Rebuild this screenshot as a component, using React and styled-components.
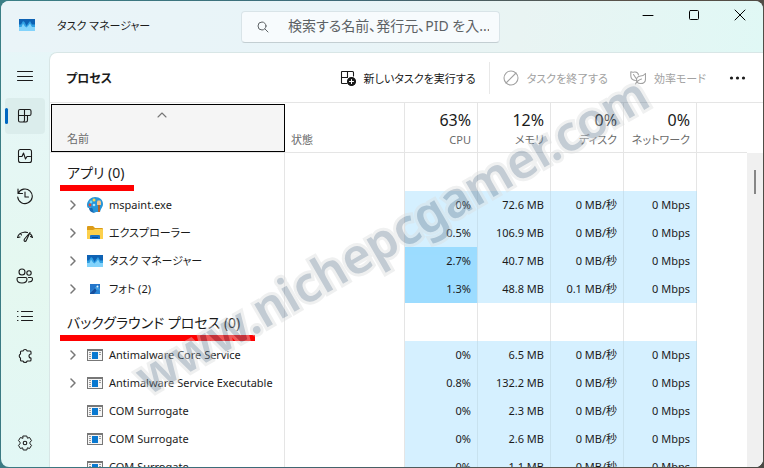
import React, { useState } from "react";
import styled, { createGlobalStyle } from "styled-components";

const GlobalStyle = createGlobalStyle`
  * {
    box-sizing: border-box;
  }
  body {
    margin: 0;
    font-family: "Noto Sans", "Noto Sans CJK JP", sans-serif;
    font-feature-settings: "palt";
    font-size: 11px;
    color: #1b1b1b;
  }
  button,
  input {
    font: inherit;
    font-feature-settings: inherit;
    color: inherit;
    border: none;
    background: none;
    padding: 0;
  }
`;

const Desktop = styled.div`
  height: 100vh;
  padding: 1px;
  overflow: hidden;
  background: linear-gradient(100deg, #3b7f86, #3d6a78 40%, #5a5148 75%, #4b4a45);
`;

const Window = styled.div`
  position: relative;
  height: 100%;
  display: flex;
  flex-direction: column;
  overflow: hidden;
  border-radius: 8px;
  background: linear-gradient(180deg, #eaf4f8 0, #e6f6f8 60px, #e5f8f0 280px, #e2f7f5);
`;

const TitleBar = styled.header`
  display: flex;
  align-items: center;
  height: 51px;
  flex: none;
  background: linear-gradient(100deg, #eaf4f8, #e8f4f8 45%, #e9f4f3 68%, #e0f8f5);
`;

const Title = styled.div`
  display: flex;
  align-items: center;
  gap: 22px;
  width: 240px;
  padding-left: 18px;
  padding-bottom: 3px;
`;

const SearchBox = styled.label`
  display: flex;
  align-items: center;
  gap: 18px;
  flex: 0 1 259px;
  height: 32px;
  padding: 0 10px 0 14px;
  border: 1px solid #d9e4e8;
  border-bottom-color: #c3ced2;
  border-radius: 4px;
  background: #f7fbfd;
  color: #5d6265;
  input {
    flex: 1;
    min-width: 0;
    padding-bottom: 2px;
    font-size: 14px;
    outline: none;
  }
  input::placeholder {
    color: #5d6265;
    opacity: 1;
  }
`;

const WindowButtons = styled.div`
  display: flex;
  align-self: flex-start;
  margin-left: auto;
  button {
    width: 46px;
    height: 28px;
    display: grid;
    place-items: center;
    color: #000;
  }
`;

const Body = styled.div`
  flex: 1;
  min-height: 0;
  display: flex;
`;

const SideBar = styled.nav`
  width: 48px;
  flex: none;
  display: flex;
  flex-direction: column;
  gap: 4px;
  padding: 6px 4px;
`;

const SideButton = styled.button`
  position: relative;
  height: 36px;
  display: grid;
  place-items: center;
  border-radius: 4px;
  margin-top: ${({ $last }) => ($last ? "auto" : "0")};
  background: ${({ $active }) => ($active ? "#dbedec" : "none")};
  &::before {
    content: "";
    display: ${({ $active }) => ($active ? "block" : "none")};
    position: absolute;
    left: 0;
    top: 10px;
    width: 3px;
    height: 16px;
    border-radius: 2px;
    background: #0067c0;
  }
`;

const Main = styled.main`
  flex: 1;
  min-width: 0;
  display: flex;
  flex-direction: column;
  background: #fff;
  border-top: 1px solid #d8e6e6;
  border-left: 1px solid #d8e6e6;
  border-top-left-radius: 8px;
`;

const ToolBar = styled.div`
  display: flex;
  align-items: center;
  height: 49px;
  flex: none;
  padding: 0 16px;
  h1 {
    flex: 1;
    margin: 0;
    font-size: 12px;
    font-weight: 600;
  }
`;

const ToolButton = styled.button`
  display: flex;
  align-items: center;
  gap: 8px;
  white-space: nowrap;
  color: ${({ disabled }) => (disabled ? "#a2a2a2" : "#1b1b1b")};
  margin-right: ${({ $gap }) => $gap}px;
`;

const Divider = styled.span`
  width: 1px;
  height: 32px;
  margin-right: 13px;
  background: #e8e8e8;
`;

const Panel = styled.div`
  flex: 1;
  min-height: 0;
  display: flex;
  overflow: hidden;
  border-top: 1px solid #e5e5e5;
`;

const TableArea = styled.div`
  flex: 1;
  min-width: 0;
  height: 100%;
  overflow: hidden;
`;

const Table = styled.table`
  width: 100%;
  table-layout: fixed;
  border-collapse: separate;
  border-spacing: 0;
`;

const Col = styled.col`
  width: ${({ $width }) => $width};
`;

const HeadCell = styled.th`
  height: 50px;
  padding: ${({ $name }) => ($name ? "1px 0 0 1px" : "0 6px")};
  border-right: ${({ $last, $name }) => ($last || $name ? "none" : "1px solid #e5e5e5")};
  border-bottom: 1px solid #e5e5e5;
  font-weight: 400;
  line-height: 18px;
  vertical-align: bottom;
  text-align: ${({ $number }) => ($number ? "right" : "left")};
  color: #6b6b6b;
  white-space: nowrap;
`;

const SortButton = styled.button`
  width: 100%;
  height: 48px;
  display: flex;
  flex-direction: column;
  align-items: flex-start;
  justify-content: space-between;
  padding: 7px 27px 0 15px;
  border: 1px solid #000;
  background: #f5f5f5;
  line-height: 18px;
  svg {
    align-self: center;
  }
`;

const HeadText = styled.span`
  display: block;
  padding-bottom: 3px;
`;

const Percent = styled.span`
  display: block;
  font-size: 16px;
  line-height: 22px;
  color: #1b1b1b;
`;

const GroupCell = styled.th`
  height: 38px;
  padding: 0 0 0 10px;
  border-right: 1px solid #e5e5e5;
  font-weight: 400;
  font-size: 14px;
  text-align: left;
  vertical-align: bottom;
  white-space: nowrap;
`;

const GroupLabel = styled.span`
  display: block;
  width: ${({ $width }) => $width}px;
  padding-left: 7px;
  line-height: 24px;
  border-bottom: 6px solid #f00;
`;

const Cell = styled.td`
  height: 28px;
  padding: 0 6px;
  border-right: ${({ $last }) => ($last ? "none" : "1px solid #e5e5e5")};
  border-right-color: ${({ $heat }) => ($heat ? "#c8e2ef" : "#e5e5e5")};
  background: ${({ $heat }) =>
    $heat === 2 ? "#9cdcff" : $heat === 1 ? "#d5f0ff" : "none"};
  text-align: right;
  line-height: 18px;
  white-space: nowrap;
`;

const NameCell = styled(Cell)`
  text-align: left;
  padding: 0 0 0 16px;
`;

const ProcessName = styled.div`
  display: flex;
  align-items: center;
  svg {
    flex: none;
  }
`;

const Expander = styled.button`
  width: 14px;
  height: 16px;
  flex: none;
  display: grid;
  place-items: center;
  margin-right: 7px;
  visibility: ${({ $hidden }) => ($hidden ? "hidden" : "visible")};
`;

const Label = styled.span`
  margin-left: 6px;
`;

const ScrollBar = styled.div`
  width: 16px;
  flex: none;
  margin-top: 50px;
  padding: 17px 7px;
  background: #f0f0f0;
  &::before {
    content: "";
    display: block;
    width: 2px;
    height: 24px;
    background: #868686;
  }
`;

const Watermark = styled.div`
  position: absolute;
  inset: 0;
  display: grid;
  place-items: center;
  padding-left: 18px;
  pointer-events: none;
  opacity: 0.4;
  span {
    transform: rotate(-30deg);
    font-size: 49px;
    font-weight: 600;
    line-height: 60px;
    color: #697f93;
    -webkit-text-stroke: 6px #d9dbdc;
    paint-order: stroke fill;
    white-space: nowrap;
  }
`;

const Line = ({ size = 18, children, ...rest }) => (
  <svg
    width={size}
    height={size}
    viewBox={`0 0 ${size} ${size}`}
    fill="none"
    stroke="currentColor"
    strokeWidth="1.1"
    strokeLinecap="round"
    strokeLinejoin="round"
    aria-hidden="true"
    {...rest}
  >
    {children}
  </svg>
);

const TaskManagerIcon = () => (
  <svg width="16" height="16" viewBox="0 0 16 16" aria-hidden="true">
    <rect y="2" width="16" height="12" fill="#0e62b4" />
    <path d="M0 7.500h2l2-3.500 1.500 1 2 4 2-3 1.500-2 2 3.500h3V14H0z" fill="#2f9fe2" />
    <path d="M0 10h2.500l1.500-3.500 2 3 1.500 1 2-2 1.500-2 2 3.500h3V14H0z" fill="#83d3fb" />
  </svg>
);

const PaintIcon = () => (
  <svg width="16" height="16" viewBox="0 0 16 16" aria-hidden="true">
    <path d="M8 0c5 0 8 3 8 7 0 3-2 4-3 8H9c-2 1-4 0-4-2 0-2-1-3-3-2-2 0-2-2-2-4 1-4 4-7 8-7z" fill="#2795d8" />
    <path d="M2 11c2-1 4 0 4 2s1 3 3 3c-4 0-7-2-7-5z" fill="#176bb5" />
    <circle cx="7" cy="3" r="1.500" fill="#f9d44b" />
    <circle cx="4" cy="5" r="1.400" fill="#74d7f5" />
    <circle cx="3" cy="8" r="1.400" fill="#e54b35" />
    <circle cx="7" cy="8" r="1.300" fill="#a8e5fa" />
    <path d="M10 5l1-2 1 1 1-1 1 2v3h-4z" fill="#f4c28b" />
    <path d="M11 8h2v7h-2z" fill="#ad6530" />
  </svg>
);

const FolderIcon = () => (
  <svg width="16" height="16" viewBox="0 0 16 16" aria-hidden="true">
    <path d="M0 2q0-1 1-1h5l2 2h7q1 0 1 1v3H0z" fill="#dc9c18" />
    <path d="M0 5h6l2-1h7q1 0 1 1v9H0z" fill="#fcd04c" />
    <path d="M3 14v-3q0-1 1-1h8q1 0 1 1v3z" fill="#1672c8" />
    <path d="M5 12h6v1H5z" fill="#0a4b93" />
  </svg>
);

const PhotoIcon = () => (
  <svg width="16" height="16" viewBox="0 0 16 16" aria-hidden="true">
    <rect x="3" y="3" width="10" height="10" fill="#2476cb" />
    <path d="M3 11l7-6 3 3v5H3z" fill="#3f9fe4" />
    <path d="M3 12l5-5 4 6H3z" fill="#174f9d" />
    <path d="M7 13l4-5 2 2v3z" fill="#2b86d6" />
    <circle cx="10.500" cy="5.500" r="1" fill="#e8f7ff" />
  </svg>
);

const AppIcon = () => (
  <svg width="16" height="16" viewBox="0 0 16 16" aria-hidden="true" shapeRendering="crispEdges">
    <rect y="2" width="16" height="12" fill="#777" />
    <rect x="1" y="4" width="14" height="9" fill="#f5f5f5" />
    <rect x="5" y="5" width="6" height="7" fill="#0878d0" />
    <path d="M2 5h2v1H2zM2 7h2v1H2zM2 9h2v1H2zM2 11h2v1H2zM12 5h2v1h-2zM12 7h2v1h-2z" fill="#999" />
  </svg>
);

const sideItems = [
  { id: "menu", label: "メニュー", icon: <path d="M1.500 4.500h15M1.500 9.500h15M1.500 13.500h15" strokeWidth="1" /> },
  {
    id: "processes",
    label: "プロセス",
    icon: <path d="M2.500 4q0-1.500 1.500-1.500h9.500q1.500 0 1.500 1.500v3q0 1.500-1.500 1.500h-11zM8.500 2.500V13q0 2-1.500 2H4q-1.500 0-1.500-1.500V8M8.500 8.500h2.500q.5 0 .5 1V13q0 2-1.500 2H7" />,
  },
  {
    id: "performance",
    label: "パフォーマンス",
    icon: (
      <>
        <rect x="2.500" y="2.500" width="13" height="13" rx="2" />
        <path d="M3 9.500h3l1.500-3.500 2 6 1.500-2.500h3.500" />
      </>
    ),
  },
  {
    id: "history",
    label: "アプリの履歴",
    icon: <path d="M2 2v4.500h4.500M2.300 6.300A7.300 7.300 0 1 1 1.700 10M9 5v5h3.500" />,
  },
  {
    id: "startup",
    label: "スタートアップ アプリ",
    icon: (
      <path d="M1.500 10.500Q2.500 6 8 5.200Q10 5 11.500 5.500M14.500 7q1.500 1.300 2 3.500M2 10.500l2-.5M4.500 6.500l1 1.500M14 5.500L8.500 12q-1 2 .5 2.500 1 0 1.500-1.500L14 5.500M16.500 10.500l-2-1" />
    ),
  },
  {
    id: "users",
    label: "ユーザー",
    icon: (
      <>
        <circle cx="6" cy="5" r="3" />
        <circle cx="13" cy="6" r="2.200" />
        <path d="M2.500 10.500h7q1.500 0 1.500 1.500 0 4-5 4t-5-4q0-1.500 1.500-1.500zM12.500 10.500H15q1.500 0 1.500 1.500 0 3-4 3" />
      </>
    ),
  },
  {
    id: "details",
    label: "詳細",
    icon: <path d="M5.500 4.500h11M5.500 9.500h11M5.500 13.500h11M1.500 4.500h.5M1.500 9.500h.5M1.500 13.500h.5" />,
  },
  {
    id: "services",
    label: "サービス",
    icon: (
      <path d="M7 4a2.200 2.200 0 0 1 4.200 0H14q1 0 1 1v2a2 2 0 0 0 0 4v2q0 1-1 1h-2.800a2.200 2.200 0 0 1-4.200 0H5.500q-1 0-1-1v-2a2.200 2.200 0 0 1 0-4V5q0-1 1-1z" />
    ),
  },
  {
    id: "settings",
    label: "設定",
    icon: (
      <>
        <circle cx="9" cy="9" r="1.800" />
        <path
          strokeWidth="1"
          d="M7.200 2h3.600l.6 2.200 2.200-.7 1.900 3.200L14 8.200v1.600l1.500 1.500-1.900 3.200-2.200-.7-.6 2.200H7.200l-.6-2.200-2.200.7-1.900-3.200L4 9.800V8.200L2.500 6.700l1.900-3.200 2.200.7z"
        />
      </>
    ),
  },
];

const usage = [
  { label: "CPU", value: "63%" },
  { label: "メモリ", value: "12%" },
  { label: "ディスク", value: "0%" },
  { label: "ネットワーク", value: "0%" },
];

const groups = [
  {
    name: "アプリ (0)",
    markWidth: 74,
    rows: [
      { name: "mspaint.exe", icon: <PaintIcon />, expand: true, data: ["0%", "72.6 MB", "0 MB/秒", "0 Mbps"] },
      { name: "エクスプローラー", icon: <FolderIcon />, expand: true, data: ["0.5%", "106.9 MB", "0 MB/秒", "0 Mbps"] },
      { name: "タスク マネージャー", icon: <TaskManagerIcon />, expand: true, data: ["2.7%", "40.7 MB", "0 MB/秒", "0 Mbps"] },
      { name: "フォト (2)", icon: <PhotoIcon />, expand: true, data: ["1.3%", "48.8 MB", "0.1 MB/秒", "0 Mbps"] },
    ],
  },
  {
    name: "バックグラウンド プロセス (0)",
    markWidth: 195,
    rows: [
      { name: "Antimalware Core Service", icon: <AppIcon />, expand: true, data: ["0%", "6.5 MB", "0 MB/秒", "0 Mbps"] },
      { name: "Antimalware Service Executable", icon: <AppIcon />, expand: true, data: ["0.8%", "132.2 MB", "0 MB/秒", "0 Mbps"] },
      { name: "COM Surrogate", icon: <AppIcon />, data: ["0%", "2.3 MB", "0 MB/秒", "0 Mbps"] },
      { name: "COM Surrogate", icon: <AppIcon />, data: ["0%", "2.6 MB", "0 MB/秒", "0 Mbps"] },
      { name: "COM Surrogate", icon: <AppIcon />, data: ["0%", "1.1 MB", "0 MB/秒", "0 Mbps"] },
    ],
  },
];

const heatOf = (value, column) => (column === 0 && parseFloat(value) > 1 ? 2 : 1);

const App = () => {
  const [page, setPage] = useState("processes");

  return (
    <Desktop>
      <GlobalStyle />
      <Window>
        <TitleBar>
          <Title>
            <TaskManagerIcon />
            <span>タスク マネージャー</span>
          </Title>
          <SearchBox>
            <Line size={14} strokeWidth="1">
              <circle cx="6" cy="6" r="4" />
              <path d="M9 9l3 3" />
            </Line>
            <input type="text" aria-label="検索" placeholder="検索する名前、発行元、PID を入..." />
          </SearchBox>
          <WindowButtons>
            <button aria-label="最小化">
              <Line size={12} strokeWidth="1"><path d="M1 6.500h10" /></Line>
            </button>
            <button aria-label="最大化">
              <Line size={12} strokeWidth="1"><rect x="1.500" y="1.500" width="9" height="9" rx="1" /></Line>
            </button>
            <button aria-label="閉じる">
              <Line size={12} strokeWidth="1"><path d="M1 1l10 10M11 1L1 11" /></Line>
            </button>
          </WindowButtons>
        </TitleBar>

        <Body>
          <SideBar>
            {sideItems.map((item) => (
              <SideButton
                key={item.id}
                aria-label={item.label}
                $active={item.id === page}
                $last={item.id === "settings"}
                onClick={() => item.id !== "menu" && setPage(item.id)}
              >
                <Line>{item.icon}</Line>
              </SideButton>
            ))}
          </SideBar>

          <Main>
            <ToolBar>
              <h1>プロセス</h1>
              <ToolButton $gap={13}>
                <Line size={16}>
                  <path d="M7 13.500H2q-.5 0-.5-.5V2q0-.5.5-.5h10.500q1 0 1 1V6M1.500 7.500H7M7.500 1.500v6" />
                  <circle cx="11.500" cy="11.500" r="4" fill="currentColor" />
                  <path d="M9.500 11.500h4M11.500 9.500v4" stroke="#fff" />
                </Line>
                新しいタスクを実行する
              </ToolButton>
              <Divider />
              <ToolButton disabled $gap={22}>
                <Line size={16}>
                  <circle cx="8" cy="8" r="7" />
                  <path d="M3 13L13 3" />
                </Line>
                タスクを終了する
              </ToolButton>
              <ToolButton disabled $gap={23}>
                <Line size={16}>
                  <path d="M5.500 10.500Q1 10 .8 6V1.800q1.700.7 3.500.2Q8 1.500 8.500 5M3.500 4.500l3 4.500M15.500 3.500V9q0 4.500-5 4.500-4 0-4-3.500 0-3.500 4-4 3 0 5-2.500zM5.500 14q1.500-3.500 6-5" />
                </Line>
                効率モード
              </ToolButton>
              <ToolButton aria-label="その他" $gap={0}>
                <svg width="18" height="6" viewBox="0 0 18 6" fill="currentColor" aria-hidden="true">
                  <circle cx="2.500" cy="3" r="1.600" />
                  <circle cx="8.500" cy="3" r="1.600" />
                  <circle cx="14.500" cy="3" r="1.600" />
                </svg>
              </ToolButton>
            </ToolBar>

            <Panel>
              <TableArea>
                <Table>
                  <colgroup>
                    <Col $width="235px" />
                    <Col $width="120px" />
                    {usage.map((u) => (
                      <Col key={u.label} $width="73px" />
                    ))}
                    <Col $width="auto" />
                  </colgroup>
                  <thead>
                    <tr>
                      <HeadCell $name>
                        <SortButton>
                          <Line size={10} height={6} viewBox="0 0 10 6" color="#777">
                            <path d="M1 5l4-4 4 4" />
                          </Line>
                          <HeadText>名前</HeadText>
                        </SortButton>
                      </HeadCell>
                      <HeadCell>
                        <HeadText>状態</HeadText>
                      </HeadCell>
                      {usage.map((u) => (
                        <HeadCell key={u.label} $number>
                          <Percent>{u.value}</Percent>
                          <HeadText>{u.label}</HeadText>
                        </HeadCell>
                      ))}
                      <HeadCell $last />
                    </tr>
                  </thead>
                  {groups.map((group) => (
                    <tbody key={group.name}>
                      <tr>
                        <GroupCell scope="rowgroup">
                          <GroupLabel $width={group.markWidth}>{group.name}</GroupLabel>
                        </GroupCell>
                        <Cell />
                        {usage.map((u) => (
                          <Cell key={u.label} />
                        ))}
                        <Cell $last />
                      </tr>
                      {group.rows.map((row, i) => (
                        <tr key={i}>
                          <NameCell>
                            <ProcessName>
                              <Expander $hidden={!row.expand} aria-label="展開">
                                <Line size={10} color="#777">
                                  <path d="M3 1l4 4-4 4" strokeWidth="1.500" />
                                </Line>
                              </Expander>
                              {row.icon}
                              <Label>{row.name}</Label>
                            </ProcessName>
                          </NameCell>
                          <Cell />
                          {row.data.map((value, c) => (
                            <Cell key={c} $heat={heatOf(value, c)}>
                              {value}
                            </Cell>
                          ))}
                          <Cell $last />
                        </tr>
                      ))}
                    </tbody>
                  ))}
                </Table>
              </TableArea>
              <ScrollBar />
            </Panel>
          </Main>
        </Body>

        <Watermark>
          <span>www.nichepcgamer.com</span>
        </Watermark>
      </Window>
    </Desktop>
  );
};

export default App;
